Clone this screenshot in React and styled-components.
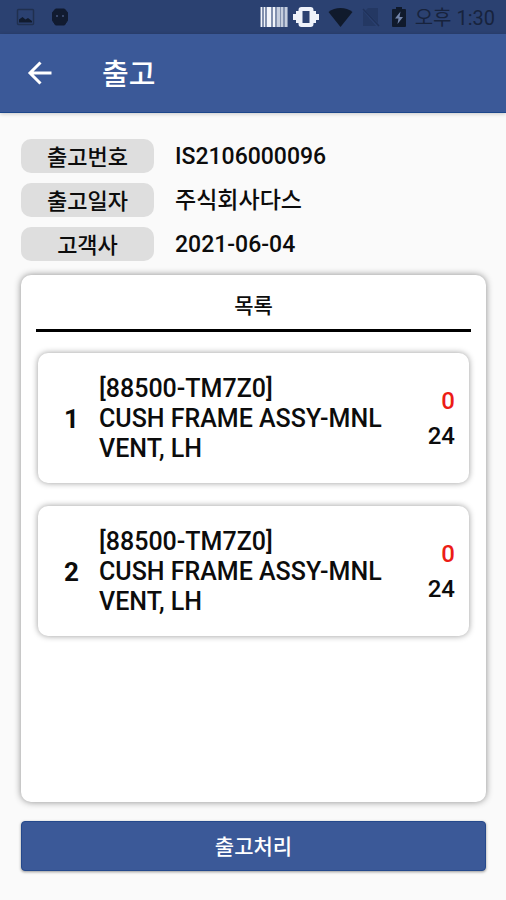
import React from "react";
import styled, { createGlobalStyle } from "styled-components";

const GlobalStyle = createGlobalStyle`
  *, *::before, *::after { box-sizing: border-box; }
  body {
    margin: 0;
    background: #fafafa;
    color: #0c0c0c;
    font-family: Roboto, "Noto Sans CJK KR", sans-serif;
    font-weight: 500;
  }
`;

const Screen = styled.div`
  display: flex;
  flex-direction: column;
  min-height: 100vh;
`;

const StatusBar = styled.div`
  display: flex;
  align-items: center;
  justify-content: space-between;
  height: 34px;
  padding: 0 11px 0 16px;
  background: #2b4171;
  color: #17233d;
`;

const StatusGroup = styled.div`
  display: flex;
  align-items: center;
  gap: ${(p) => p.$gap}px;
  svg { display: block; }
`;

const Clock = styled.span`
  font-size: 20px;
  line-height: 34px;
  padding-top: 2px;
  font-weight: 400;
  white-space: nowrap;
`;

const AppBar = styled.header`
  display: flex;
  align-items: center;
  gap: 48px;
  height: 79px;
  padding: 0 26px;
  background: #3b5998;
  color: #fff;
  border-bottom: 1px solid #1c478b;
  box-shadow: 0 1px 4px rgba(0, 0, 0, 0.2);
`;

const BackButton = styled.button`
  display: flex;
  padding: 0;
  border: 0;
  background: none;
  color: inherit;
  cursor: pointer;
`;

const Title = styled.h1`
  margin: 0;
  padding-top: 4px;
  font-size: 29px;
  line-height: 40px;
  font-weight: 500;
`;

const Content = styled.main`
  display: flex;
  flex: 1;
  flex-direction: column;
  padding: 26px 20px 29px 21px;
`;

const Details = styled.dl`
  display: grid;
  grid-template-columns: 133px 1fr;
  gap: 10px 21px;
  margin: 0 0 14px;
`;

const Label = styled.dt`
  height: 34px;
  border-radius: 10px;
  background: #dedede;
  font-size: 22px;
  line-height: 37px;
  text-align: center;
`;

const Value = styled.dd`
  height: 34px;
  margin: 0;
  font-size: 23px;
  line-height: 36px;
`;

const Panel = styled.section`
  display: flex;
  flex: 1;
  flex-direction: column;
  padding: 15px 15px 16px;
  border-radius: 10px;
  background: #fff;
  box-shadow: 0 0 7px rgba(0, 0, 0, 0.45);
`;

const PanelTitle = styled.h2`
  margin: 0;
  padding-bottom: 7px;
  border-bottom: 3px solid #000;
  font-size: 21px;
  line-height: 32px;
  font-weight: 500;
  text-align: center;
`;

const ItemList = styled.ol`
  display: flex;
  flex-direction: column;
  gap: 23px;
  margin: 21px 2px 0;
  padding: 0;
  list-style: none;
`;

const Item = styled.li`
  display: grid;
  grid-template-columns: 61px 1fr auto;
  align-items: center;
  min-height: 130px;
  padding: 2px 14px 0 0;
  border-radius: 10px;
  background: #fff;
  box-shadow: 0 0 6px rgba(0, 0, 0, 0.4);
`;

const Index = styled.span`
  padding-left: 6px;
  font-size: 26px;
  line-height: 30px;
  font-weight: 700;
  text-align: center;
`;

const Product = styled.div`
  font-size: 25px;
  line-height: 30px;
`;

const Code = styled.div``;

const Counts = styled.div`
  display: grid;
  font-size: 24px;
  line-height: 35px;
  text-align: right;
`;

const Count = styled.span`
  color: ${(p) => (p.$alert ? "#ec1c16" : "inherit")};
`;

const SubmitButton = styled.button`
  height: 50px;
  margin-top: 19px;
  padding: 2px 0 0;
  border: 1px solid #25498c;
  border-radius: 4px;
  background: #3b5998;
  color: #fff;
  font: 500 21px/32px Roboto, "Noto Sans CJK KR", sans-serif;
  box-shadow: 0 1px 3px rgba(0, 0, 0, 0.4);
  cursor: pointer;
`;

const PictureIcon = () => (
  <svg width="19" height="18" viewBox="0 0 19 18" aria-hidden="true">
    <rect x="1.5" y="1.5" width="16" height="15" rx="1" fill="none" stroke="#20304f" strokeWidth="1.5" />
    <path d="M3 14.5v-3L6.500 9l3 2.500 2.500-1.500 4 3v1.500z" fill="#111b2e" />
  </svg>
);

const RobotIcon = () => (
  <svg width="18" height="18" viewBox="0 0 18 18" aria-hidden="true">
    <path d="M4.500 1h9l3 3.500v8L13.500 17h-9l-3-4.500v-8z" fill="#111b30" stroke="#111b30" strokeLinejoin="round" />
    <circle cx="6" cy="8" r="1" fill="#44567d" />
    <circle cx="12" cy="8" r="1" fill="#44567d" />
  </svg>
);

const BarcodeIcon = () => (
  <svg width="28" height="20" viewBox="0 0 28 20" aria-hidden="true">
    <rect width="28" height="20" fill="#8190ae" />
    <path d="M1 0h1v20H1zM4 0h1v20H4zM7 0h4v20H7zM13 0h2v20h-2z" fill="#f2f5fb" />
    <path d="M17 0h3v20h-3zM21 0h2v20h-2zM25 0h2v20h-2z" fill="#c5cede" />
  </svg>
);

const VibrateIcon = () => (
  <svg width="26" height="20" viewBox="0 0 26 20" aria-hidden="true">
    <path d="M1.500 7v6M4.500 4v12M24.500 7v6M21.500 4v12" stroke="#eef2fa" strokeWidth="3" />
    <rect x="7.500" y="2" width="11" height="16" rx="1" fill="#2b4171" stroke="#eef2fa" strokeWidth="4" />
  </svg>
);

const WifiIcon = () => (
  <svg width="25" height="20" viewBox="0 0 25 20" aria-hidden="true">
    <path d="M.5 5C7-.5 18-.5 24.500 5L12.500 20z" fill="#101a2c" />
  </svg>
);

const NoSimIcon = () => (
  <svg width="18" height="20" viewBox="0 0 18 20" aria-hidden="true">
    <path d="M1 4v15h13zM6 1h10v15L3.500 3.500z" fill="#243863" />
    <path d="M1 2l16 17" stroke="#20325a" strokeWidth="1.500" />
  </svg>
);

const BatteryIcon = () => (
  <svg width="14" height="20" viewBox="0 0 14 20" aria-hidden="true">
    <path d="M4 0h6v2h3a1 1 0 0 1 1 1v16a1 1 0 0 1-1 1H1a1 1 0 0 1-1-1V3a1 1 0 0 1 1-1h3z" fill="#101a2c" />
    <path d="M8.500 4.500L3 11.500h3.500L5.500 17l5.500-7H7.500z" fill="#7385aa" />
  </svg>
);

const BackArrow = () => (
  <svg width="28" height="28" viewBox="0 0 28 28" fill="none" aria-hidden="true">
    <path d="M25.500 14H4M14.500 3.500L4 14l10.500 10.500" stroke="currentColor" strokeWidth="3" />
  </svg>
);

const details = [
  ["출고번호", "IS2106000096"],
  ["출고일자", "주식회사다스"],
  ["고객사", "2021-06-04"],
];

const items = [
  { id: 1, code: "[88500-TM7Z0]", name: "CUSH FRAME ASSY-MNL VENT, LH", done: 0, total: 24 },
  { id: 2, code: "[88500-TM7Z0]", name: "CUSH FRAME ASSY-MNL VENT, LH", done: 0, total: 24 },
];

export default function App() {
  return (
    <Screen>
      <GlobalStyle />
      <StatusBar>
        <StatusGroup $gap={16}>
          <PictureIcon />
          <RobotIcon />
        </StatusGroup>
        <StatusGroup $gap={9}>
          <StatusGroup $gap={5}>
            <BarcodeIcon />
            <VibrateIcon />
          </StatusGroup>
          <WifiIcon />
          <StatusGroup $gap={12}>
            <NoSimIcon />
            <BatteryIcon />
          </StatusGroup>
          <Clock>오후 1:30</Clock>
        </StatusGroup>
      </StatusBar>
      <AppBar>
        <BackButton type="button" aria-label="뒤로">
          <BackArrow />
        </BackButton>
        <Title>출고</Title>
      </AppBar>
      <Content>
        <Details>
          {details.map(([label, value]) => (
            <React.Fragment key={label}>
              <Label>{label}</Label>
              <Value>{value}</Value>
            </React.Fragment>
          ))}
        </Details>
        <Panel>
          <PanelTitle>목록</PanelTitle>
          <ItemList>
            {items.map((item) => (
              <Item key={item.id}>
                <Index>{item.id}</Index>
                <Product>
                  <Code>{item.code}</Code>
                  {item.name}
                </Product>
                <Counts>
                  <Count $alert>{item.done}</Count>
                  <Count>{item.total}</Count>
                </Counts>
              </Item>
            ))}
          </ItemList>
        </Panel>
        <SubmitButton type="button">출고처리</SubmitButton>
      </Content>
    </Screen>
  );
}
